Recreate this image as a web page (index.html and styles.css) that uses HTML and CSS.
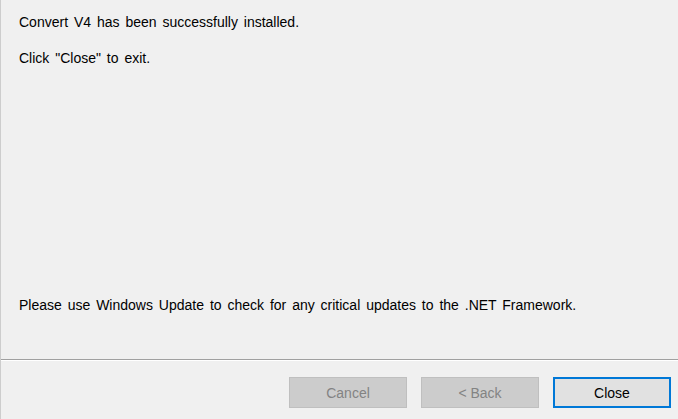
FILE: index.html
```html
<!DOCTYPE html>
<html>
<head>
<meta charset="utf-8">
<link rel="stylesheet" href="styles.css">
</head>
<body>
<div class="window">
  <div class="content">
    <p class="line first">Convert V4 has been successfully installed.</p>
    <p class="line second">Click "Close" to exit.</p>
    <div class="spacer"></div>
    <p class="line note">Please use Windows Update to check for any critical updates to the .NET Framework.</p>
  </div>
  <div class="separator"></div>
  <div class="footer">
    <button class="btn disabled">Cancel</button>
    <button class="btn disabled">&lt; Back</button>
    <button class="btn primary">Close</button>
  </div>
</div>
</body>
</html>
```
FILE: styles.css
```css
html, body {
  margin: 0;
  padding: 0;
  height: 100%;
  background: #f0f0f0;
}
.window {
  height: 419px;
  box-sizing: border-box;
  border-left: 1px solid #cdcdcd;
  display: flex;
  flex-direction: column;
  font-family: "Liberation Sans", Arial, sans-serif;
  font-size: 14px;
  color: #000;
}
.content {
  flex: 1;
  display: flex;
  flex-direction: column;
  padding: 0 0 0 18px;
}
.line {
  margin: 0;
  line-height: 16px;
  word-spacing: 2px;
}
.first {
  margin-top: 14px;
}
.second {
  margin-top: 20px;
}
.spacer {
  flex: 1;
}
.note {
  margin-bottom: 46px;
}
.separator {
  height: 1px;
  background: #a0a0a0;
  border-bottom: 1px solid #ffffff;
}
.footer {
  display: flex;
  justify-content: flex-end;
  gap: 14px;
  padding: 16px 7px 11px 0;
}
.btn {
  width: 118px;
  height: 31px;
  box-sizing: border-box;
  font-family: "Liberation Sans", Arial, sans-serif;
  font-size: 14px;
  padding: 0;
  margin: 0;
}
.disabled {
  background: #cccccc;
  border: 1px solid #bfbfbf;
  color: #838383;
}
.primary {
  background: #e1e1e1;
  border: 2px solid #0078d7;
  color: #000;
}
```
